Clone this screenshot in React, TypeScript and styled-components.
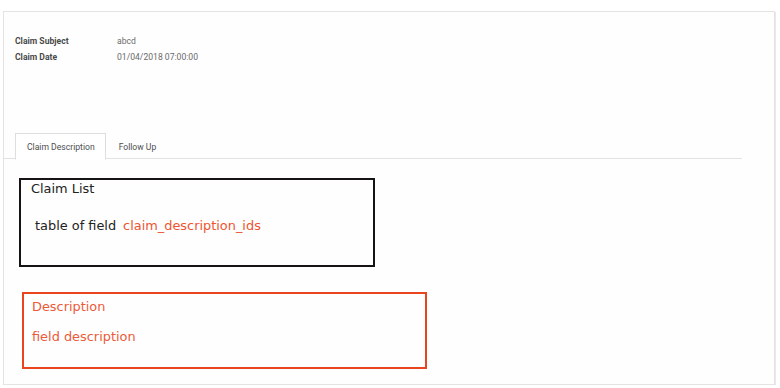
import React from "react";
import styled, { createGlobalStyle } from "styled-components";

const Global = createGlobalStyle`
  html, body { margin: 0; padding: 0; background: #ffffff; }
  body { font-family: Roboto, "Liberation Sans", sans-serif; }
`;

const Sheet = styled.div`
  box-sizing: border-box;
  margin: 11px 0 0 3px;
  width: 772px;
  height: 374px;
  border: 1px solid #e4e2e2;
  background: #fefefe;
  box-shadow: 0 2px 0 #e0dfdf, 1px 1px 0 #ece8e8;
  display: flex;
  flex-direction: column;
`;

const Fields = styled.div`
  display: grid;
  grid-template-columns: 102px auto;
  grid-auto-rows: 16px;
  align-items: center;
  padding: 21px 0 0 11px;
  font-size: 8.6px;
`;

const Label = styled.div`
  font-weight: 700;
  color: #4a4a4a;
`;

const Value = styled.div`
  color: #6a6a6a;
`;

const TabNav = styled.div`
  display: flex;
  margin-top: 68px;
  width: 738px;
  height: 26px;
  padding-left: 11px;
  box-sizing: border-box;
  border-bottom: 1px solid #e2e2e2;
`;

const Tab = styled.div<{ $active?: boolean }>`
  box-sizing: border-box;
  height: 27px;
  margin-bottom: -1px;
  padding: 0 ${(p) => (p.$active ? "10px" : "12px")} 0 ${(p) => (p.$active ? "11px" : "12px")};
  display: flex;
  align-items: center;
  font-size: 8.6px;
  color: #4e4e4e;
  background: ${(p) => (p.$active ? "#ffffff" : "transparent")};
  border: 1px solid ${(p) => (p.$active ? "#dedede" : "transparent")};
  border-bottom-color: ${(p) => (p.$active ? "#ffffff" : "transparent")};
`;

const Content = styled.div`
  display: flex;
  flex-direction: column;
  align-items: flex-start;
  padding: 19px 0 0 15px;
  font-family: "DejaVu Sans", sans-serif;
  font-size: 12.9px;
`;

const Box = styled.div<{ $color: string; $w: number; $h: number; $shift: number }>`
  box-sizing: border-box;
  width: ${(p) => p.$w}px;
  height: ${(p) => p.$h}px;
  margin-left: ${(p) => p.$shift}px;
  border: 2px solid ${(p) => p.$color};
`;

const ListBox = styled(Box)`
  padding: 0 0 0 10px;
  line-height: 17px;
  color: #222222;
`;

const DescBox = styled(Box)`
  margin-top: 25px;
  padding: 2px 0 0 8px;
  line-height: 17px;
  color: #ec5a38;
`;

const Line = styled.div<{ $top: number; $indent?: number }>`
  margin-top: ${(p) => p.$top}px;
  padding-left: ${(p) => p.$indent ?? 0}px;
  white-space: nowrap;
`;

const Field = styled.span`
  color: #ee5430;
  margin-left: 7px;
`;

export default function App() {
  return (
    <>
      <Global />
      <Sheet>
        <Fields>
          <Label>Claim Subject</Label>
          <Value>abcd</Value>
          <Label>Claim Date</Label>
          <Value>01/04/2018 07:00:00</Value>
        </Fields>
        <TabNav>
          <Tab $active>Claim Description</Tab>
          <Tab>Follow Up</Tab>
        </TabNav>
        <Content>
          <ListBox $color="#151313" $w={356} $h={89} $shift={0}>
            <Line $top={0}>Claim List</Line>
            <Line $top={20} $indent={4}>
              table of field<Field>claim_description_ids</Field>
            </Line>
          </ListBox>
          <DescBox $color="#e8441e" $w={405} $h={77} $shift={3}>
            <Line $top={2}>Description</Line>
            <Line $top={13}>field description</Line>
          </DescBox>
        </Content>
      </Sheet>
    </>
  );
}
